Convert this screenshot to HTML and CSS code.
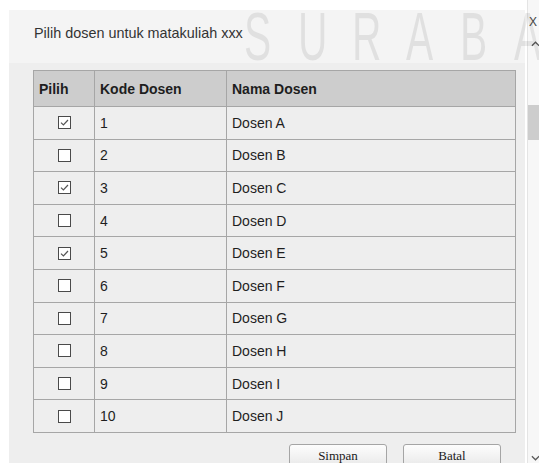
FILE: index.html
```html
<!DOCTYPE html>
<html lang="id">
<head>
<meta charset="utf-8">
<title>Pilih dosen</title>
<link rel="stylesheet" href="styles.css">
</head>
<body>
<div class="screen">
  <div class="dialog">
    <div class="dialog-head">
      <span class="dialog-title">Pilih dosen untuk matakuliah xxx</span>
    </div>
    <div class="dialog-body">
      <div class="grid">
        <div class="cell th">Pilih</div>
        <div class="cell th">Kode Dosen</div>
        <div class="cell th">Nama Dosen</div>

        <div class="cell pick"><span class="cb on"><svg viewBox="0 0 11 11"><path d="M2 5.6 L4.4 8 L9 3"/></svg></span></div>
        <div class="cell">1</div><div class="cell">Dosen A</div>

        <div class="cell pick"><span class="cb"></span></div>
        <div class="cell">2</div><div class="cell">Dosen B</div>

        <div class="cell pick"><span class="cb on"><svg viewBox="0 0 11 11"><path d="M2 5.6 L4.4 8 L9 3"/></svg></span></div>
        <div class="cell">3</div><div class="cell">Dosen C</div>

        <div class="cell pick"><span class="cb"></span></div>
        <div class="cell">4</div><div class="cell">Dosen D</div>

        <div class="cell pick"><span class="cb on"><svg viewBox="0 0 11 11"><path d="M2 5.6 L4.4 8 L9 3"/></svg></span></div>
        <div class="cell">5</div><div class="cell">Dosen E</div>

        <div class="cell pick"><span class="cb"></span></div>
        <div class="cell">6</div><div class="cell">Dosen F</div>

        <div class="cell pick"><span class="cb"></span></div>
        <div class="cell">7</div><div class="cell">Dosen G</div>

        <div class="cell pick"><span class="cb"></span></div>
        <div class="cell">8</div><div class="cell">Dosen H</div>

        <div class="cell pick"><span class="cb"></span></div>
        <div class="cell">9</div><div class="cell">Dosen I</div>

        <div class="cell pick"><span class="cb"></span></div>
        <div class="cell">10</div><div class="cell">Dosen J</div>
      </div>
      <div class="actions">
        <button class="btn" type="button">Simpan</button>
        <button class="btn" type="button">Batal</button>
      </div>
    </div>
  </div>
  <div class="scroll">
    <svg class="arrow up" viewBox="0 0 10 6"><path d="M1 5 L5 1 L9 5"/></svg>
    <div class="thumb"></div>
    <svg class="arrow down" viewBox="0 0 10 6"><path d="M1 1 L5 5 L9 1"/></svg>
  </div>
  <div class="mark"><span>S</span><span>U</span><span>R</span><span>A</span><span>B</span><span>A</span></div>
  <span class="close">X</span>
</div>
</body>
</html>
```

FILE: styles.css
```css
html, body {
  margin: 0;
  padding: 0;
  background: #ffffff;
  overflow: hidden;
}

.screen {
  position: relative;
  display: flex;
  height: 463px;
  overflow: hidden;
  font-family: "Liberation Sans", Arial, sans-serif;
  color: #1e1e1e;
}

/* dialog window */
.dialog {
  position: relative;
  margin: 10px 0 0 9px;
  width: 517px;
  height: 480px;
  background: #eeeeee;
}

.dialog-head {
  box-sizing: border-box;
  height: 53px;
  padding: 14px 0 0 25px;
  background: #f4f4f4;
}

.dialog-title {
  font-size: 14.4px;
  line-height: 17px;
  color: #333333;
}

.dialog-body {
  padding: 7px 0 0 24px;
}

/* lecturer list */
.grid {
  display: grid;
  width: max-content;
  grid-template-columns: 60px 131px 288px;
  grid-template-rows: 35px repeat(10, 31.6px);
  gap: 1px;
  background: #a6a6a6;
  border: 1px solid #a6a6a6;
}

.cell {
  display: flex;
  align-items: center;
  padding-left: 5px;
  background: #eeeeee;
  font-size: 14px;
  color: #1e1e1e;
}

.th {
  background: #cdcdcd;
  font-weight: bold;
}

.pick {
  justify-content: center;
  padding-left: 0;
}

.cb {
  box-sizing: border-box;
  display: block;
  width: 13px;
  height: 13px;
  border: 1px solid #4a4a4a;
  background: #ffffff;
}

.cb svg {
  display: block;
  width: 11px;
  height: 11px;
  fill: none;
  stroke: #555555;
  stroke-width: 1.2;
}

/* footer buttons */
.actions {
  display: flex;
  gap: 16px;
  margin-top: 11px;
  padding-left: 256px;
}

.btn {
  box-sizing: border-box;
  width: 98px;
  height: 24px;
  padding: 0;
  border: 1px solid #a5a5a5;
  border-radius: 3px;
  background: linear-gradient(#fdfdfd, #e8e8e8);
  font-family: "Liberation Serif", "Times New Roman", serif;
  font-size: 13px;
  color: #1a1a1a;
}

/* faint brand watermark across the header */
.mark {
  position: absolute;
  top: 2px;
  left: 244px;
  display: flex;
  font-size: 68px;
  line-height: 68px;
  color: rgba(0, 0, 0, 0.08);
  pointer-events: none;
}

.mark span {
  display: block;
  width: 54px;
  transform: scaleX(0.6);
  transform-origin: left center;
}

/* page scrollbar */
.scroll {
  position: relative;
  box-sizing: border-box;
  margin-left: 2px;
  width: 12px;
  border-left: 1px solid #e4e4e4;
  background: #f7f7f7;
}

.thumb {
  position: absolute;
  top: 105px;
  left: 0;
  width: 12px;
  height: 35px;
  background: #cdcdcd;
}

.arrow {
  position: absolute;
  left: 3px;
  width: 9px;
  height: 6px;
  fill: none;
  stroke: #5a5a5a;
  stroke-width: 1.4;
}

.arrow.up { top: 41px; }
.arrow.down { top: 455px; }

.close {
  position: absolute;
  top: 15px;
  left: 529px;
  font-size: 12px;
  line-height: 14px;
  color: #444444;
}
```
